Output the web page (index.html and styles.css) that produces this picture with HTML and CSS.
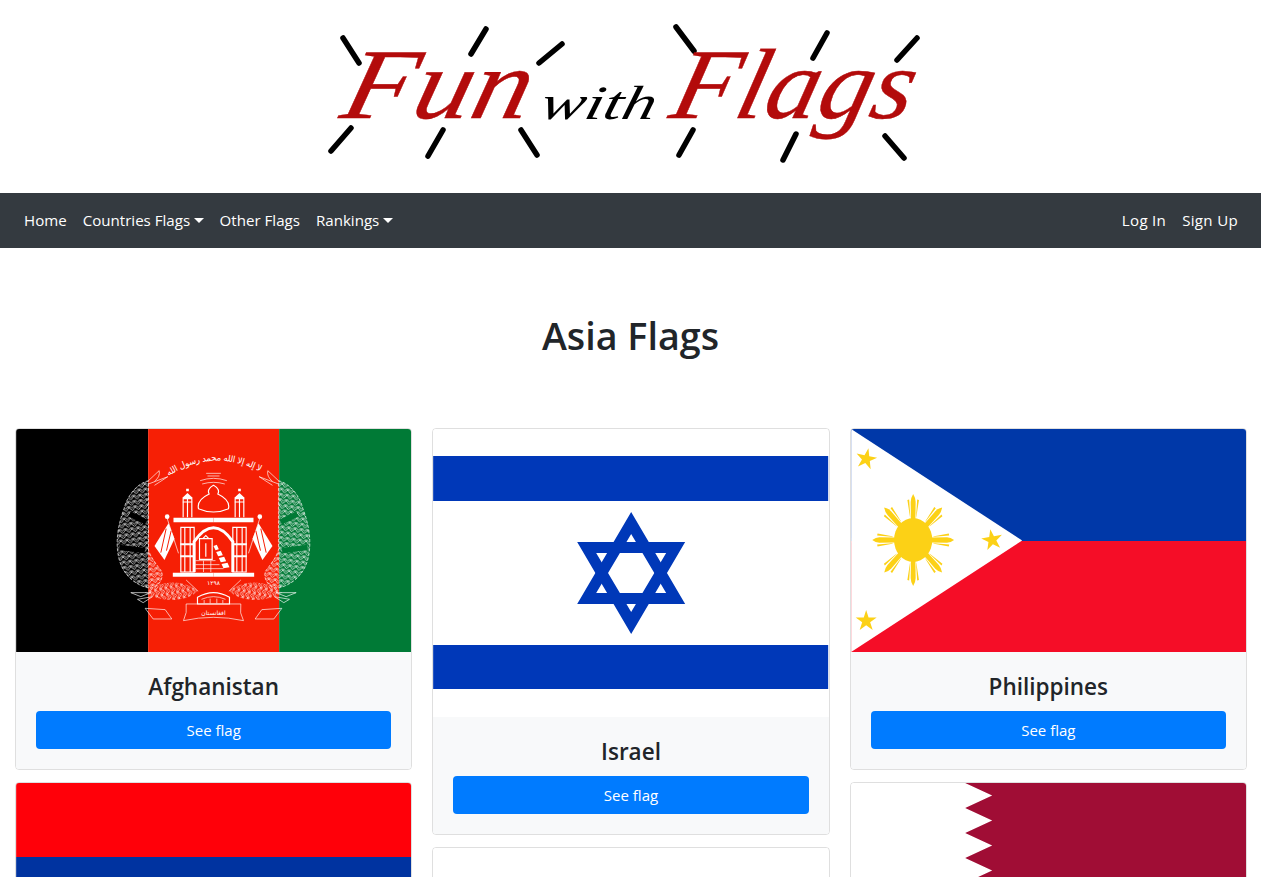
FILE: index.html
```html
<!DOCTYPE html>
<html lang="en">
<head>
  <meta charset="UTF-8" />
  <meta name="viewport" content="width=device-width, initial-scale=1" />
  <title>Fun with Flags</title>
  <link rel="stylesheet" href="styles.css">
</head>
<body>
  <header class="logo-bar">
    <svg class="logo" viewBox="315 0 632 193" width="632" height="193" role="img" aria-label="Fun with Flags">
      <g class="logo-rays">
        <line x1="343" y1="38" x2="359" y2="63" />
        <line x1="486" y1="29" x2="471" y2="54" />
        <line x1="562" y1="44" x2="539" y2="63" />
        <line x1="351" y1="128" x2="331" y2="151" />
        <line x1="443" y1="130" x2="428" y2="156" />
        <line x1="521" y1="130" x2="537" y2="155" />
        <line x1="676" y1="27" x2="694" y2="51" />
        <line x1="827" y1="33" x2="813" y2="58" />
        <line x1="917" y1="38" x2="897" y2="60" />
        <line x1="693" y1="130" x2="679" y2="155" />
        <line x1="796" y1="134" x2="783" y2="160" />
        <line x1="885" y1="136" x2="904" y2="158" />
      </g>
      <text class="logo-red" transform="translate(338 118) skewX(-14)" textLength="187" lengthAdjust="spacingAndGlyphs">Fun</text>
      <text class="logo-black" transform="translate(538 119) skewX(-14)" textLength="115" lengthAdjust="spacingAndGlyphs">with</text>
      <text class="logo-red" transform="translate(667 118) skewX(-14)" textLength="241" lengthAdjust="spacingAndGlyphs">Flags</text>
    </svg>
  </header>

  <nav class="navbar">
    <ul class="nav-list">
      <li><a class="nav-link" href="#">Home</a></li>
      <li><a class="nav-link caret" href="#">Countries Flags</a></li>
      <li><a class="nav-link" href="#">Other Flags</a></li>
      <li><a class="nav-link caret" href="#">Rankings</a></li>
    </ul>
    <ul class="nav-list nav-right">
      <li><a class="nav-link" href="#">Log In</a></li>
      <li><a class="nav-link" href="#">Sign Up</a></li>
    </ul>
  </nav>

  <h1 class="page-title">Asia Flags</h1>

  <main class="card-columns">
    <div class="card-col">
      <div class="card">
        <svg class="flag" viewBox="0 0 395 223" role="img" aria-label="Flag of Afghanistan">
          <defs>
            <pattern id="grain" width="19" height="16" patternUnits="userSpaceOnUse" patternTransform="rotate(-8)">
              <path d="M9.500 15L2 8Q0 4 2 1l7.500 7L17 1q2 3 0 7z" fill="none" stroke="#fff" stroke-width="2.200" />
            </pattern>
            <pattern id="grain-flat" width="16" height="19" patternUnits="userSpaceOnUse" patternTransform="rotate(-12)">
              <path d="M15 9.500L8 2Q4 0 1 2l7 7.500L1 17q3 2 7 0z" fill="none" stroke="#fff" stroke-width="2.200" />
            </pattern>
            <g id="emblem-half">
              <!-- wreath -->
              <path class="grain-fill" d="M145 122C110 130 80 170 72 205C55 250 45 300 55 350C65 400 100 435 150 445C175 440 190 420 185 395C170 375 150 350 145 330Z" />
              <path class="grain-flat-fill" d="M135 458C170 425 240 412 292 452C270 482 190 492 135 458Z" />
              <path class="emblem-lines" d="M145 122l32-30q4 18-14 32M145 132l58-22-40 26M92 458h60l-30 12zM112 478l45-8-28 18zM135 505l60 4 20 28-56 0zM258 420l36 34" />
              <!-- minaret -->
              <path class="emblem-heavy" d="M249 232v-56h26v56M247 186h30M262 176v56" />
              <path class="emblem-white" d="M246 174l16-15 16 15zM258 154h8v-8h-8z" />
              <!-- pier and slab end -->
              <path class="emblem-heavy" d="M242 262h40v134h-40zM254 262v134M270 262v134" />
              <path class="emblem-white" d="M220 233h120v14H220zM240 310h44v6h-44zM240 346h44v6h-44z" />
              <!-- flag on its pole -->
              <path class="emblem-lines" d="M200 232l35 108" />
              <circle class="emblem-white" cx="201" cy="230" r="7" />
              <path class="emblem-white" d="M205 250l18 46-30 64-30-42z" />
              <path class="emblem-stripe" d="M198 266l-16 72M213 272l-14 60" />
              <!-- base -->
              <path class="emblem-white" d="M218 398h122v12H218z" />
            </g>
          </defs>
          <rect width="132" height="223" fill="#000" />
          <rect x="132" width="131" height="223" fill="#f61f05" />
          <rect x="263" width="132" height="223" fill="#007a36" />
          <g transform="translate(84 11) scale(.3333)">
            <use href="#emblem-half" />
            <use href="#emblem-half" transform="matrix(-1 0 0 1 680 0)" />
            <!-- dark bands over the wreath -->
            <path class="band-black" d="M88 222l50 24M58 322l76 10" />
            <path class="band-green" d="M592 222l-50 24M622 322l-76 10" />
            <!-- dome -->
            <path class="emblem-heavy" d="M295 206q-6-26 32-44q-8-14 13-26q21 12 13 26q38 18 32 44q-45 20-90 0z" />
            <path class="emblem-lines" d="M300 122q40-14 80 0M306 132q34-10 68 0M318 100h44M322 108h36" />
            <!-- arch -->
            <path class="arch" d="M282 396V305Q340 222 398 305V396" />
            <!-- inner room and stairs -->
            <path class="emblem-heavy" d="M298 296h38v62h-38zM308 296l9-9 9 9M317 310v40" />
            <path class="emblem-white" d="M340 318l10-4 6 14-10 3zM348 336l14-4 6 14-14 3zM356 354l16-4 6 14-16 3zM364 372l18-4 6 14-18 3z" />
            <path class="emblem-lines" d="M286 362h60M286 374h72M286 386h84M310 362v34M332 362v34" />
            <!-- bottom bundle and banner -->
            <path class="emblem-heavy" d="M292 472q48-28 96 0v20h-96z" />
            <path class="emblem-lines" d="M304 478q36-16 72 0M312 490v-10M330 490v-14M350 490v-14M368 490v-10" />
            <path class="emblem-lines" d="M258 492h164q-5 28 8 50q-90-20-180 0q12-24 8-50z" />
            <path id="arc-top" d="M205 108Q340 20 490 100" fill="none" />
            <text class="emblem-text"><textPath href="#arc-top" textLength="290">لا إله إلا الله محمد رسول الله</textPath></text>
            <text class="emblem-small" x="340" y="434" text-anchor="middle">۱۲۹۸</text>
            <text class="emblem-small" x="340" y="524" text-anchor="middle">افغانستان</text>
          </g>
        </svg>
        <div class="card-body">
          <h4 class="card-title">Afghanistan</h4>
          <a class="btn" href="#">See flag</a>
        </div>
      </div>
      <div class="card">
        <svg class="flag" viewBox="0 0 395 223" role="img" aria-label="Flag of Armenia">
          <rect width="395" height="74" fill="#ff0009" />
          <rect y="74" width="395" height="75" fill="#0033a0" />
          <rect y="149" width="395" height="74" fill="#f2a800" />
        </svg>
      </div>
    </div>

    <div class="card-col">
      <div class="card">
        <svg class="flag flag-tall" viewBox="0 0 395 288" role="img" aria-label="Flag of Israel">
          <rect width="395" height="288" fill="#fff" />
          <rect y="27" width="395" height="45" fill="#0038b8" />
          <rect y="216" width="395" height="44" fill="#0038b8" />
          <path fill="#0038b8" fill-rule="evenodd" d="M198 83L252 175H144ZM198 105L163 164H233Z" />
          <path fill="#0038b8" fill-rule="evenodd" d="M198 205L144 113H252ZM198 183L233 124H163Z" />
        </svg>
        <div class="card-body">
          <h4 class="card-title">Israel</h4>
          <a class="btn" href="#">See flag</a>
        </div>
      </div>
      <div class="card">
        <svg class="flag flag-japan" viewBox="0 0 395 263" role="img" aria-label="Flag of Japan">
          <rect width="395" height="263" fill="#fff" />
          <circle cx="197" cy="131" r="79" fill="#bc002d" />
        </svg>
      </div>
    </div>

    <div class="card-col">
      <div class="card">
        <svg class="flag" viewBox="0 0 395 223" role="img" aria-label="Flag of the Philippines">
          <defs>
            <polygon id="star" points="0,-11 2.400,-3.400 10.500,-3.400 4,1.300 6.500,9 0,4.200 -6.500,9 -4,1.300 -10.500,-3.400 -2.400,-3.400" />
            <g id="ray-set">
              <path d="M-2.500-20L-2.800-38Q-2.800-42 0-46Q2.800-42 2.800-38L2.500-20Z" />
              <path d="M-3.400-22L-6.500-40L-4.500-40.500L-3.300-24ZM3.400-22L6.500-40L4.500-40.500L3.300-24Z" />
            </g>
          </defs>
          <rect width="395" height="112" fill="#0038a8" />
          <rect y="112" width="395" height="111" fill="#f50d27" />
          <polygon points="0,0 171,111.500 0,223" fill="#fff" />
          <g fill="#fcd116" transform="translate(62 111) scale(.89 1)">
            <use href="#ray-set" />
            <use href="#ray-set" transform="rotate(45)" />
            <use href="#ray-set" transform="rotate(90)" />
            <use href="#ray-set" transform="rotate(135)" />
            <use href="#ray-set" transform="rotate(180)" />
            <use href="#ray-set" transform="rotate(225)" />
            <use href="#ray-set" transform="rotate(270)" />
            <use href="#ray-set" transform="rotate(315)" />
            <ellipse rx="21.500" ry="22" />
          </g>
          <use href="#star" fill="#fcd116" transform="translate(15 30) rotate(12)" />
          <use href="#star" fill="#fcd116" transform="translate(141 111) rotate(-10)" />
          <use href="#star" fill="#fcd116" transform="translate(15 192)" />
        </svg>
        <div class="card-body">
          <h4 class="card-title">Philippines</h4>
          <a class="btn" href="#">See flag</a>
        </div>
      </div>
      <div class="card">
        <svg class="flag flag-qatar" viewBox="0 0 395 225" role="img" aria-label="Flag of Qatar">
          <rect width="395" height="225" fill="#fff" />
          <path fill="#a00d35" d="M114 0L141 12.500L114 25L141 37.500L114 50L141 62.500L114 75L141 87.500L114 100L141 112.500L114 125L141 137.500L114 150L141 162.500L114 175L141 187.500L114 200L141 212.500L114 225H395V0Z" />
        </svg>
      </div>
    </div>
  </main>
</body>
</html>
```

FILE: styles.css
```css
html, body {
  height: 100%;
  overflow: hidden;
}

body {
  margin: 0;
  font-family: "Open Sans", "Noto Sans", sans-serif;
  font-size: 15px;
  color: #212529;
  background: #fff;
}

.logo-bar {
  height: 193px;
  display: flex;
  justify-content: center;
}

.logo {
  display: block;
}

.logo-rays line {
  stroke: #000;
  stroke-width: 5.500;
  stroke-linecap: round;
}

.logo-red {
  font-family: "Liberation Serif", serif;
  font-style: italic;
  font-size: 100px;
  fill: #b30b0b;
  stroke: #b30b0b;
  stroke-width: .4;
}

.logo-black {
  font-family: "Liberation Serif", serif;
  font-style: italic;
  font-size: 48px;
  fill: #000;
}

.navbar {
  height: 55px;
  padding: 0 15px 0 16px;
  background: #343a40;
  display: flex;
  justify-content: space-between;
  align-items: center;
}

.nav-list {
  display: flex;
  margin: 0;
  padding: 0;
  list-style: none;
}

.nav-link {
  display: block;
  padding: 7px 8px 9px;
  color: #fff;
  font-size: 15.100px;
  text-decoration: none;
  line-height: 24px;
}

.nav-right .nav-link {
  letter-spacing: .3px;
}

.caret::after {
  content: "";
  display: inline-block;
  margin-left: 3.500px;
  vertical-align: 3px;
  border-top: 5px solid #fff;
  border-left: 5px solid transparent;
  border-right: 5px solid transparent;
}

.page-title {
  margin: 0;
  padding: 63px 0 68px;
  height: 49px;
  line-height: 49px;
  font-size: 37.700px;
  font-weight: 600;
  text-align: center;
}

.card-columns {
  display: flex;
  gap: 20px;
  padding: 0 14px 0 15px;
}

.card-col {
  flex: 1;
  min-width: 0;
}

.card {
  margin-bottom: 12px;
  border: 1px solid rgba(0, 0, 0, .125);
  border-radius: 4px;
  overflow: hidden;
}

.flag {
  display: block;
  width: 100%;
  height: 223px;
}

.flag-tall {
  height: 288px;
}

.flag-japan {
  height: 263px;
}

.flag-qatar {
  height: 225px;
}

.card-body {
  padding: 20px;
  background: #f8f9fa;
  text-align: center;
}

.card-title {
  margin: 0 0 10px;
  font-size: 22.500px;
  font-weight: 600;
  line-height: 29px;
}

.btn {
  display: block;
  height: 38px;
  line-height: 38px;
  border-radius: 4px;
  background: #007bff;
  color: #fff;
  text-decoration: none;
}

/* afghan emblem, drawn at 3x */
.grain-fill {
  fill: url(#grain);
  stroke: #fff;
  stroke-width: 2;
  stroke-dasharray: 9 5;
}

.grain-flat-fill {
  fill: url(#grain-flat);
}

.emblem-lines {
  fill: none;
  stroke: #fff;
  stroke-width: 2;
}

.emblem-heavy {
  fill: none;
  stroke: #fff;
  stroke-width: 3.500;
}

.emblem-white {
  fill: #fff;
}

.emblem-stripe {
  fill: none;
  stroke: #f61f05;
  stroke-width: 3;
}

.arch {
  fill: none;
  stroke: #fff;
  stroke-width: 9;
}

.band-black,
.band-green {
  fill: none;
  stroke-width: 16;
}

.band-black {
  stroke: #000;
}

.band-green {
  stroke: #007a36;
}

.emblem-text {
  font-family: "DejaVu Sans", sans-serif;
  font-size: 26px;
  fill: #fff;
}

.emblem-small {
  font-family: "DejaVu Sans", sans-serif;
  font-size: 18px;
  fill: #fff;
}
```
